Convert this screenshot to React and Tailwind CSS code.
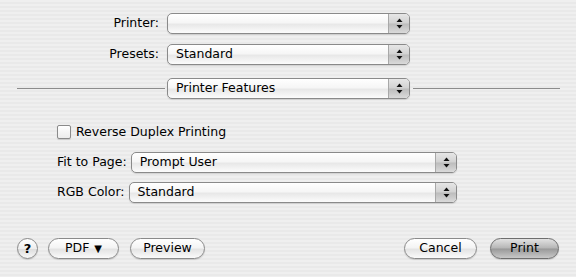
const font = { fontFamily: '"Lucida Grande", "DejaVu Sans", sans-serif' };

const Arrows = () => (
  <svg width="7" height="11" viewBox="0 0 7 11" fill="#111">
    <path d="M3.5 0.5 L6.5 4 L0.5 4 Z" />
    <path d="M0.5 7 L6.5 7 L3.5 10.5 Z" />
  </svg>
);

const Popup = ({ value, width }) => (
  <div
    className={`flex h-[21px] shrink-0 items-stretch rounded-[5px] border border-[#8a8a8a] bg-[linear-gradient(#ffffff,#f6f6f6_45%,#e8e8e8_55%,#fcfcfc)] shadow-[0_1px_1px_rgba(0,0,0,0.12)] ${width}`}
  >
    <span className="flex flex-1 items-center truncate pl-[8px] text-[12.5px] leading-none text-black">{value}</span>
    <span className="flex w-[21px] items-center justify-center rounded-r-[4px] border-l border-[#a8a8a8] bg-[linear-gradient(#e6e6e6,#d2d2d2_48%,#bcbcbc_52%,#dadada)]">
      <Arrows />
    </span>
  </div>
);

const Button = ({ children, width, dark }) => (
  <button
    className={`flex h-[21px] items-center justify-center rounded-full border text-[12.5px] leading-none text-black shadow-[0_1px_1px_rgba(0,0,0,0.15)] ${width} ${
      dark
        ? 'border-[#6e6e6e] bg-[linear-gradient(#e2e2e2,#b6b6b6_48%,#999999_52%,#c8c8c8)]'
        : 'border-[#8a8a8a] bg-[linear-gradient(#ffffff,#f4f4f4_45%,#e4e4e4_55%,#fafafa)]'
    }`}
  >
    {children}
  </button>
);

export default function App() {
  return (
    <div
      style={font}
      className="h-[277px] w-[576px] overflow-hidden bg-[repeating-linear-gradient(to_bottom,#efefef_0px,#efefef_2px,#e9e9e9_2px,#e9e9e9_4px)] text-black"
    >
      {/* printer / presets */}
      <div className="flex h-[21px] items-center mt-[13px]">
        <span className="w-[159px] text-right text-[12.5px] leading-none">Printer:</span>
        <div className="ml-[8px]">
          <Popup value="" width="w-[243px]" />
        </div>
      </div>
      <div className="mt-[10px] flex h-[21px] items-center">
        <span className="w-[159px] text-right text-[12.5px] leading-none">Presets:</span>
        <div className="ml-[8px]">
          <Popup value="Standard" width="w-[243px]" />
        </div>
      </div>

      {/* panel switcher */}
      <div className="mt-[13px] flex h-[21px] items-center">
        <div className="ml-[17px] h-px w-[148px] bg-[#8c8c8c]" />
        <div className="ml-[2px]">
          <Popup value="Printer Features" width="w-[243px]" />
        </div>
        <div className="ml-[3px] h-px w-[147px] bg-[#8c8c8c]" />
      </div>

      {/* features */}
      <div className="w-[457px] pl-[57px]">
        <label className="mt-[26px] flex h-[14px] items-center">
          <span className="h-[14px] w-[14px] rounded-[2px] border border-[#8a8a8a] bg-[linear-gradient(#ffffff,#ececec)] shadow-[0_1px_1px_rgba(0,0,0,0.15)]" />
          <span className="ml-[5px] text-[12.5px] leading-none">Reverse Duplex Printing</span>
        </label>
        <div className="mt-[13px] flex h-[21px] items-center">
          <span className="text-[12.5px] leading-none">Fit to Page:</span>
          <div className="ml-[4px] flex-1">
            <Popup value="Prompt User" width="w-full" />
          </div>
        </div>
        <div className="mt-[9px] flex h-[21px] items-center">
          <span className="text-[12.5px] leading-none">RGB Color:</span>
          <div className="ml-[4px] flex-1">
            <Popup value="Standard" width="w-full" />
          </div>
        </div>
      </div>

      {/* buttons */}
      <div className="mt-[35px] flex h-[21px] items-center pl-[17px] pr-[17px]">
        <button className="flex h-[21px] w-[21px] items-center justify-center rounded-full border border-[#8a8a8a] bg-[linear-gradient(#ffffff,#eeeeee_50%,#dedede_55%,#f8f8f8)] text-[13px] font-bold leading-none shadow-[0_1px_1px_rgba(0,0,0,0.15)]">
          ?
        </button>
        <div className="ml-[10px]">
          <Button width="w-[71px]">
            PDF <span className="ml-[5px] text-[10px]">▼</span>
          </Button>
        </div>
        <div className="ml-[11px]">
          <Button width="w-[75px]">Preview</Button>
        </div>
        <div className="ml-auto">
          <Button width="w-[73px]">Cancel</Button>
        </div>
        <div className="ml-[13px]">
          <Button width="w-[69px]" dark>
            Print
          </Button>
        </div>
      </div>
    </div>
  );
}
